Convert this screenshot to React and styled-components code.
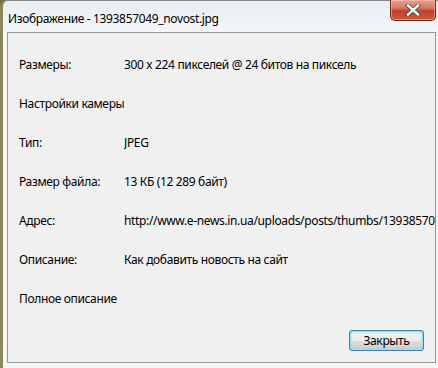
import styled, { createGlobalStyle } from "styled-components";

const GlobalStyle = createGlobalStyle`
  html, body {
    margin: 0;
    padding: 0;
    background: #6f6b4c;
    overflow: hidden;
  }
`;

const font = `"Noto Sans", "Open Sans", "Liberation Sans", sans-serif`;

const Window = styled.div`
  box-sizing: border-box;
  width: 438px;
  height: 368px;
  display: flex;
  flex-direction: column;
  padding: 0 2px 5px 4px;
  border-top-left-radius: 7px;
  border-left: 3px solid #8b865e;
  border-top: 1px solid #8a8a8a;
  background: linear-gradient(180deg, #e9edf1 0%, #f7f9fb 40px, #f4f6f8 100%);
  font-family: ${font};
  font-size: 12px;
  letter-spacing: -0.35px;
  color: #000;
`;

const TitleBar = styled.div`
  height: 31px;
  display: flex;
  align-items: flex-start;
  justify-content: space-between;
`;

const Title = styled.div`
  padding: 10px 0 0 1px;
  line-height: 16px;
  text-shadow: 0 0 6px rgba(255, 255, 255, 0.9);
`;

const CloseButton = styled.div`
  box-sizing: border-box;
  width: 46px;
  height: 21px;
  margin-top: -1px;
  display: flex;
  align-items: center;
  justify-content: center;
  border: 1px solid #6b2a1e;
  border-top: none;
  border-radius: 0 0 5px 5px;
  background: linear-gradient(180deg, #e9a191 0%, #d77563 40%, #c3402b 55%, #cc5a40 100%);
  box-shadow: inset 0 0 0 1px rgba(255, 210, 200, 0.45);
`;

const Panel = styled.div`
  flex: 1;
  position: relative;
  border: 1px solid #979797;
  background: #f0f0f0;
  overflow: hidden;
  padding: 12px 0 0 11px;
`;

const Rows = styled.div`
  display: grid;
  grid-template-columns: 105px 1fr;
  grid-auto-rows: 39px;
  align-items: center;
`;

const Label = styled.div`
  white-space: nowrap;
  grid-column: ${(p) => (p.$wide ? "1 / span 2" : "auto")};
`;

const Value = styled.div`
  white-space: nowrap;
  overflow: hidden;
`;

const Footer = styled.div`
  position: absolute;
  right: 11px;
  bottom: 11px;
`;

const Button = styled.button`
  box-sizing: border-box;
  width: 75px;
  height: 21px;
  padding: 0;
  font-family: ${font};
  font-size: 12px;
  letter-spacing: -0.35px;
  color: #000;
  border: 1px solid #3c7fb1;
  border-radius: 3px;
  background: linear-gradient(180deg, #f2f2f2 0%, #ebebeb 50%, #dddddd 51%, #cfcfcf 100%);
  box-shadow: inset 0 0 0 1px #9fe3fa, inset 0 0 2px 1px #5fc8f0;
`;

const rows = [
  { label: "Размеры:", value: "300 x 224 пикселей @ 24 битов на пиксель" },
  { label: "Настройки камеры", wide: true },
  { label: "Тип:", value: "JPEG" },
  { label: "Размер файла:", value: "13 КБ (12 289 байт)" },
  { label: "Адрес:", value: "http://www.e-news.in.ua/uploads/posts/thumbs/1393857049_novost.jpg" },
  { label: "Описание:", value: "Как добавить новость на сайт" },
  { label: "Полное описание", wide: true },
];

const CloseIcon = () => (
  <svg width="16" height="12" viewBox="0 0 16 12">
    <path
      d="M3 1.5 L13 10.5 M13 1.5 L3 10.5"
      stroke="#4a4a4a"
      strokeWidth="4.2"
      strokeLinecap="square"
    />
    <path
      d="M3 1.5 L13 10.5 M13 1.5 L3 10.5"
      stroke="#ffffff"
      strokeWidth="2.4"
      strokeLinecap="square"
    />
  </svg>
);

export default function App() {
  return (
    <>
      <GlobalStyle />
      <Window>
        <TitleBar>
          <Title>Изображение - 1393857049_novost.jpg</Title>
          <CloseButton>
            <CloseIcon />
          </CloseButton>
        </TitleBar>
        <Panel>
          <Rows>
            {rows.map((r) =>
              r.wide ? (
                <Label key={r.label} $wide>
                  {r.label}
                </Label>
              ) : (
                [<Label key={r.label}>{r.label}</Label>, <Value key={r.label + "-v"}>{r.value}</Value>]
              )
            )}
          </Rows>
          <Footer>
            <Button>Закрыть</Button>
          </Footer>
        </Panel>
      </Window>
    </>
  );
}
